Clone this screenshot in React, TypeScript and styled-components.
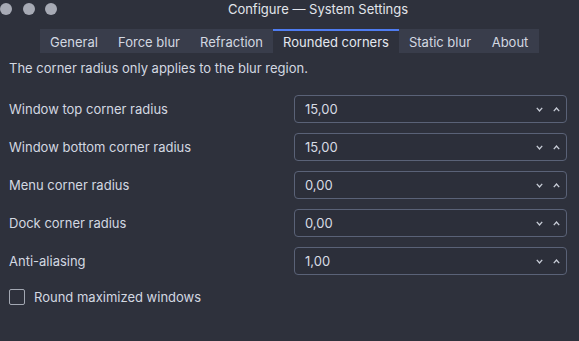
import React, { FunctionComponent } from 'react'
import styled, { createGlobalStyle } from 'styled-components'

const GlobalStyle = createGlobalStyle`
  html, body {
    margin: 0;
    padding: 0;
    background: #2e313c;
  }
  body {
    font-family: Inter, 'Noto Sans', sans-serif;
    color: #d3d8e1;
  }
`

const Window = styled('div')`
  width: 579px;
  height: 341px;
  background: #2e313c;
  overflow: hidden;
`

const TitleBar = styled('div')`
  display: flex;
  align-items: center;
  height: 17px;
`

const Lights = styled('div')`
  display: flex;
  gap: 10.5px;
  padding-top: 1px;
`

const Light = styled('span')`
  width: 12px;
  height: 12px;
  border-radius: 50%;
  background: #a7aab5;
`

const Title = styled('div')`
  flex: 1;
  text-align: center;
  font-size: 13px;
  color: #e2e5eb;
  padding-top: 1px;
`

const TabBar = styled('div')`
  display: flex;
  margin: 12px 0 0 40px;
  width: 499px;
  height: 24px;
`

const Tab = styled('div')<{ $width: number; $active?: boolean }>`
  width: ${p => p.$width}px;
  display: flex;
  align-items: center;
  justify-content: center;
  box-sizing: border-box;
  font-size: 13px;
  color: ${p => (p.$active ? '#e4e8ef' : '#d3d8e1')};
  background: ${p => (p.$active ? 'transparent' : '#393d4b')};
  border-top: 2px solid ${p => (p.$active ? '#4f7cf0' : '#393d4b')};
  padding-bottom: 1px;
`

const Content = styled('div')`
  padding: 7px 12px 0 9px;
`

const Note = styled('div')`
  font-size: 13px;
  line-height: 16px;
`

const Form = styled('div')`
  display: grid;
  grid-template-columns: 285px 1fr;
  row-gap: 10px;
  align-items: center;
  margin-top: 19px;
`

const Label = styled('div')`
  font-size: 13px;
`

const SpinBox = styled('div')`
  display: flex;
  align-items: center;
  height: 28px;
  box-sizing: border-box;
  border: 1px solid #5a6277;
  border-radius: 4px;
  padding: 0 6px 0 10px;
  background: #2c2f3a;
`

const Value = styled('span')`
  flex: 1;
  font-size: 13px;
  color: #d8dce4;
`

const Arrows = styled('span')`
  display: flex;
  gap: 10px;
  align-items: center;
`

const CheckRow = styled('div')`
  display: flex;
  align-items: center;
  gap: 9px;
  margin-top: 14px;
  font-size: 13px;
`

const CheckBox = styled('span')`
  width: 16px;
  height: 16px;
  box-sizing: border-box;
  border: 1px solid #a3a8b3;
  border-radius: 2px;
`

const Chevron: FunctionComponent<{ up?: boolean }> = ({ up }) => (
  <svg width='7' height='5' viewBox='0 0 7 5'>
    <polyline
      points={up ? '0.8,4.2 3.5,1 6.2,4.2' : '0.8,0.8 3.5,4 6.2,0.8'}
      fill='none'
      stroke='#c8cdd7'
      strokeWidth='1.3'
    />
  </svg>
)

const tabs = [
  { name: 'General', width: 68 },
  { name: 'Force blur', width: 82 },
  { name: 'Refraction', width: 83 },
  { name: 'Rounded corners', width: 126, active: true },
  { name: 'Static blur', width: 82 },
  { name: 'About', width: 58 }
]

const rows = [
  { label: 'Window top corner radius', value: '15,00' },
  { label: 'Window bottom corner radius', value: '15,00' },
  { label: 'Menu corner radius', value: '0,00' },
  { label: 'Dock corner radius', value: '0,00' },
  { label: 'Anti-aliasing', value: '1,00' }
]

const App: FunctionComponent = () => (
  <Window>
    <GlobalStyle />
    <TitleBar>
      <Lights>
        <Light />
        <Light />
        <Light />
      </Lights>
      <Title>Configure — System Settings</Title>
    </TitleBar>
    <TabBar>
      {tabs.map(t => (
        <Tab key={t.name} $width={t.width} $active={t.active}>
          {t.name}
        </Tab>
      ))}
    </TabBar>
    <Content>
      <Note>The corner radius only applies to the blur region.</Note>
      <Form>
        {rows.map(r => (
          <React.Fragment key={r.label}>
            <Label>{r.label}</Label>
            <SpinBox>
              <Value>{r.value}</Value>
              <Arrows>
                <Chevron />
                <Chevron up />
              </Arrows>
            </SpinBox>
          </React.Fragment>
        ))}
      </Form>
      <CheckRow>
        <CheckBox />
        Round maximized windows
      </CheckRow>
    </Content>
  </Window>
)

export default App
